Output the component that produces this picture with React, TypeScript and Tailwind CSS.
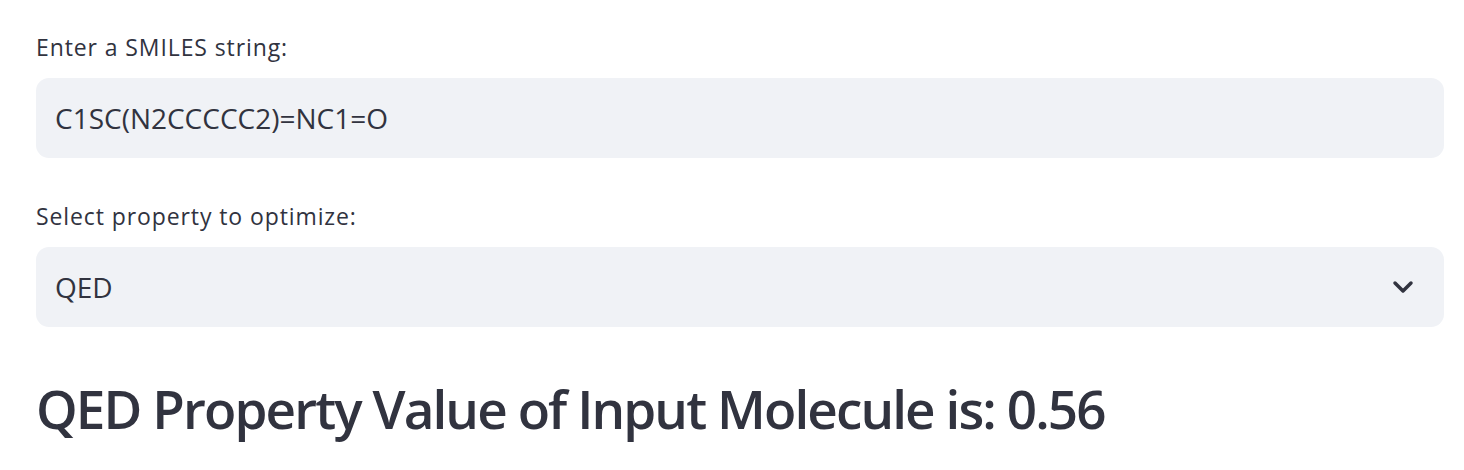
import React from "react";

const font = { fontFamily: '"Open Sans", "Noto Sans", sans-serif' };

const App = () => {
  return (
    <div className="w-[1464px] h-[470px] bg-white text-[#31333f] pl-[36px] pr-[20px] pt-[30px]" style={font}>
      <div className="flex flex-col">
        <label className="text-[23px] tracking-[0.9px] leading-[34px] h-[34px]">Enter a SMILES string:</label>
        <div className="mt-[14px] h-[80px] rounded-[13px] bg-[#f0f2f6] flex items-center px-[19px]">
          <span className="text-[28px]">C1SC(N2CCCCC2)=NC1=O</span>
        </div>
        <label className="mt-[41px] text-[23px] tracking-[0.9px] leading-[34px] h-[34px]">Select property to optimize:</label>
        <div className="mt-[14px] h-[80px] rounded-[13px] bg-[#f0f2f6] flex items-center justify-between pl-[19px] pr-[30px]">
          <span className="text-[28px]">QED</span>
          <svg width="22" height="14" viewBox="0 0 22 14" fill="none">
            <path d="M3 3 L11 11 L19 3" stroke="#31333f" strokeWidth="3.5" strokeLinecap="round" strokeLinejoin="round" />
          </svg>
        </div>
        <h2 className="mt-[48px] text-[53px] leading-[68px] font-semibold tracking-[-1.9px]">
          QED Property Value of Input Molecule is: 0.56
        </h2>
      </div>
    </div>
  );
};

export default App;
